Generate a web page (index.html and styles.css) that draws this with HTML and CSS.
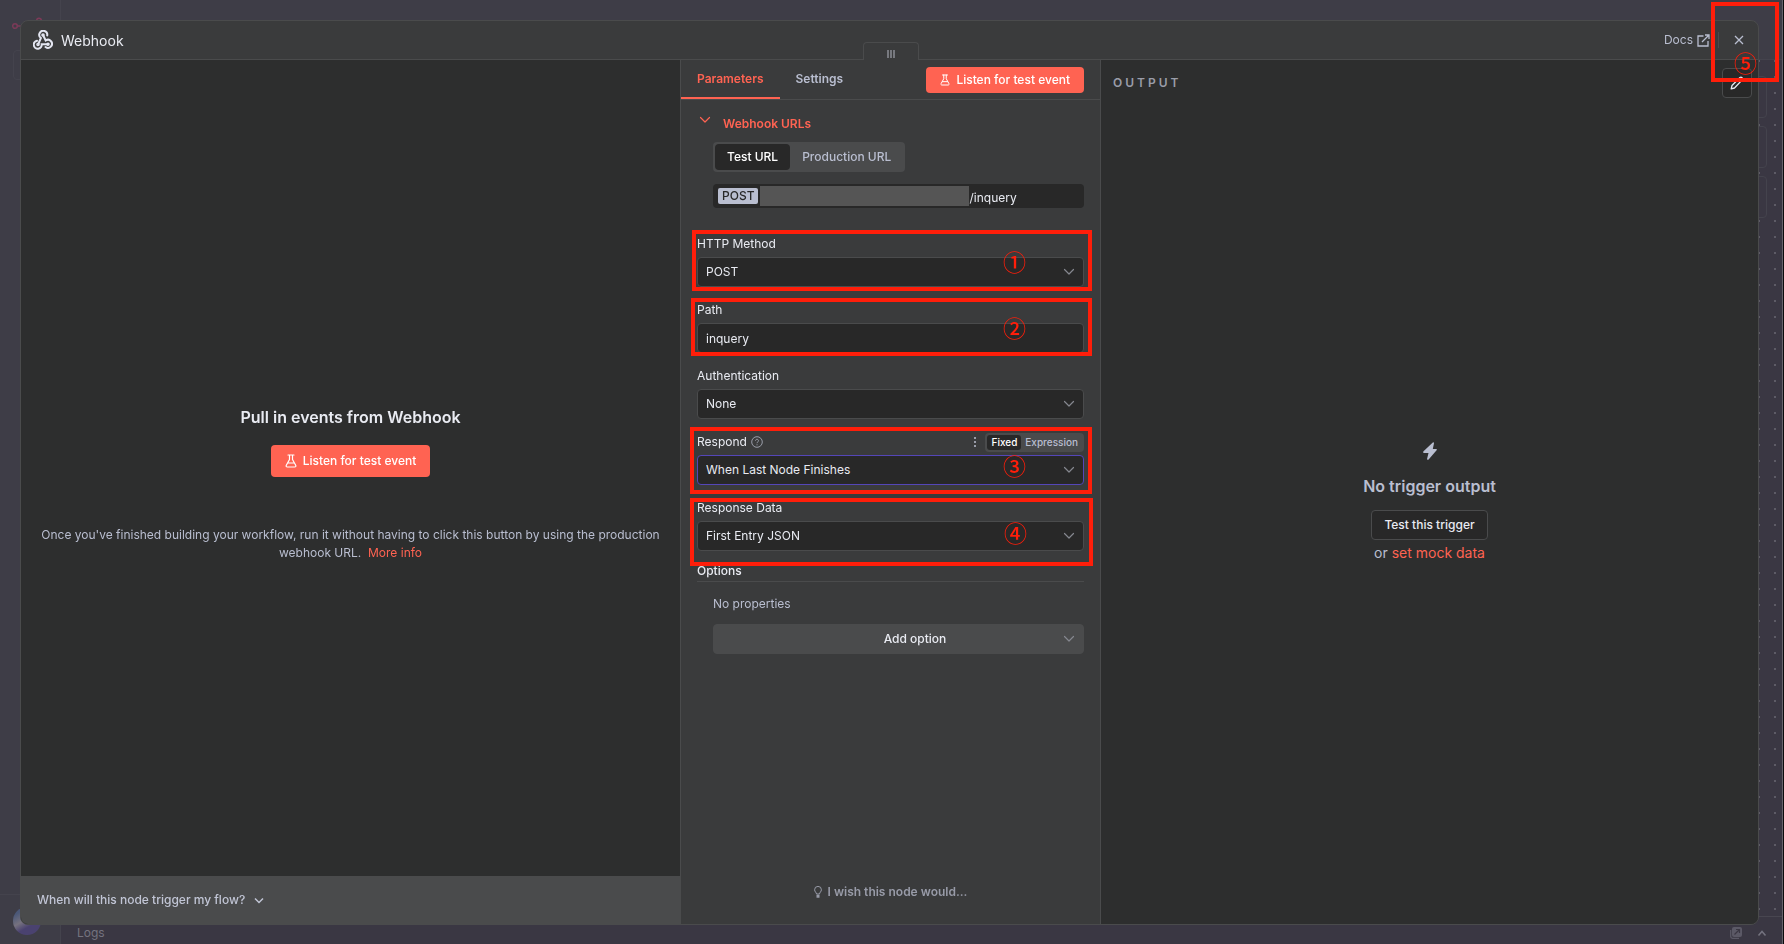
FILE: index.html
```html
<!DOCTYPE html>
<html lang="en">
<head>
    <meta charset="UTF-8">
    <meta name="viewport" content="width=device-width, initial-scale=1.0">
    <title>Webhook</title>
    <link rel="stylesheet" href="styles.css">
</head>
<body>
<svg class="sprite" aria-hidden="true">
    <symbol id="chevron" viewBox="0 0 12 8"><path d="M1.500 1.500 6 6l4.500-4.500" fill="none" stroke="currentColor" stroke-width="1.200" stroke-linecap="round" stroke-linejoin="round"/></symbol>
    <symbol id="flask" viewBox="0 0 12 14"><path d="M3 1h6M4.500 1v4.500L1.300 11.300c-.5 1 0 1.700 1 1.700h7.400c1 0 1.500-.7 1-1.700L7.500 5.500V1M3 9h6" fill="none" stroke="currentColor" stroke-width="1.200" stroke-linecap="round" stroke-linejoin="round"/></symbol>
</svg>

<!-- Editor behind the dialog -->
<div class="editor" aria-hidden="true">
    <div class="sidebar">
        <svg class="brand" viewBox="0 0 36 20" width="36" height="20">
            <g fill="none" stroke="#7c3a58" stroke-width="1.500"><circle cx="3" cy="14" r="2.300"/><path d="M5.500 14H9"/><circle cx="27" cy="8.500" r="2.300"/></g>
        </svg>
        <div class="nav-box"></div>
        <div class="user"><span class="avatar"></span></div>
    </div>
    <div class="workspace">
        <div class="topbar"></div>
        <div class="canvas">
            <div class="tool"></div>
            <div class="tool"></div>
            <div class="tool"></div>
        </div>
        <div class="logs">
            <span>Logs</span>
            <svg class="pop" viewBox="0 0 12 12" width="12" height="12"><rect x="2" y="0" width="10" height="10" rx="2" fill="#5b5966"/><path d="M.7 3v6.500q0 1.800 1.800 1.800H9" fill="none" stroke="#5b5966" stroke-width="1.300"/><path d="m4.500 7.500 5-5M6 2.500h3.500V6" fill="none" stroke="#3a3743" stroke-width="1.200"/></svg>
            <svg class="up" viewBox="0 0 10 7" width="10" height="7"><path d="m1.500 5.500 3.500-4 3.500 4" fill="none" stroke="currentColor" stroke-width="1.500"/></svg>
        </div>
    </div>
</div>

<div class="dialog" role="dialog" aria-labelledby="node-title">
    <header class="dialog-header">
        <svg class="node-icon" viewBox="0 0 20 20" width="20" height="20" fill="none" stroke="#e3e6f1" stroke-width="2" stroke-linecap="round">
            <path d="M14.200 5.500A4 4 0 1 0 7.900 8L5.500 13.500"/>
            <path d="M4 10.800a4 4 0 1 0 4.700 3.400h6.300"/>
            <path d="m10 5 2.700 5.500A4 4 0 1 1 12.500 17"/>
            <circle cx="10" cy="5" r=".8"/><circle cx="5" cy="14.500" r=".8"/><circle cx="15" cy="14.300" r=".8"/>
        </svg>
        <h1 id="node-title">Webhook</h1>
        <a class="docs" href="#">Docs
            <svg viewBox="0 0 13 13" width="13" height="13" fill="none" stroke="currentColor" stroke-width="1.300"><path d="M6.500 2H1v10h10V7M5 8l7-7M8 1h4v4"/></svg>
        </a>
        <button class="close" type="button" aria-label="Close">
            <svg viewBox="0 0 10 10" width="10" height="10" fill="none" stroke="currentColor" stroke-width="1.300"><path d="m1 1 8 8M9 1 1 9"/></svg>
        </button>
        <div class="mark mark-close"><span>⑤</span></div>
    </header>

    <div class="panels">
        <section class="input-panel">
            <div class="intro">
                <h2>Pull in events from Webhook</h2>
                <button class="primary large" type="button"><svg width="12" height="14"><use href="#flask"/></svg>Listen for test event</button>
                <p>Once you've finished building your workflow, run it without having to click this button by using the production webhook URL.&nbsp; <a href="#">More info</a></p>
            </div>
            <button class="help" type="button">When will this node trigger my flow?<svg viewBox="0 0 10 7" width="10" height="7"><path d="m1 1.500 4 4 4-4" fill="none" stroke="currentColor" stroke-width="1.500"/></svg></button>
        </section>

        <section class="params-panel">
            <div class="drag"><i></i><i></i><i></i></div>
            <nav class="tabs">
                <a class="tab active" href="#">Parameters</a>
                <a class="tab" href="#">Settings</a>
                <button class="primary" type="button"><svg width="10" height="12"><use href="#flask"/></svg>Listen for test event</button>
            </nav>

            <form class="params">
                <div class="urls">
                    <button class="urls-title" type="button"><svg width="12" height="8"><use href="#chevron"/></svg>Webhook URLs</button>
                    <div class="switch">
                        <button class="on" type="button">Test URL</button>
                        <button type="button">Production URL</button>
                    </div>
                    <div class="url"><span class="method">POST</span><span class="masked"></span><span class="url-path">/inquery</span></div>
                </div>

                <div class="field">
                    <div class="label-row"><label for="method">HTTP Method</label></div>
                    <div class="control">
                        <select id="method"><option>POST</option></select>
                        <svg class="arrow" width="12" height="8"><use href="#chevron"/></svg>
                    </div>
                    <div class="mark mark-method"><span>①</span></div>
                </div>
                <div class="field">
                    <div class="label-row"><label for="path">Path</label></div>
                    <div class="control"><input id="path" type="text" value="inquery"></div>
                    <div class="mark mark-path"><span>②</span></div>
                </div>
                <div class="field">
                    <div class="label-row"><label for="auth">Authentication</label></div>
                    <div class="control">
                        <select id="auth"><option>None</option></select>
                        <svg class="arrow" width="12" height="8"><use href="#chevron"/></svg>
                    </div>
                </div>
                <div class="field">
                    <div class="label-row">
                        <label for="respond">Respond</label>
                        <svg class="hint" viewBox="0 0 12 12" width="12" height="12" fill="none" stroke="currentColor"><circle cx="6" cy="6" r="5.300"/><path d="M4.500 4.800c0-2 3-2 3 0C7.500 6 6 5.800 6 7.200M6 8.300v1"/></svg>
                        <svg class="dots" viewBox="0 0 2 10" width="2" height="10" fill="currentColor"><path d="M0 0h2v2H0zM0 4h2v2H0zM0 8h2v2H0z"/></svg>
                        <div class="mode"><button class="on" type="button">Fixed</button><button type="button">Expression</button></div>
                    </div>
                    <div class="control focused">
                        <select id="respond"><option>When Last Node Finishes</option></select>
                        <svg class="arrow" width="12" height="8"><use href="#chevron"/></svg>
                    </div>
                    <div class="mark mark-respond"><span>③</span></div>
                </div>
                <div class="field">
                    <div class="label-row"><label for="data">Response Data</label></div>
                    <div class="control">
                        <select id="data"><option>First Entry JSON</option></select>
                        <svg class="arrow" width="12" height="8"><use href="#chevron"/></svg>
                    </div>
                    <div class="mark mark-data"><span>④</span></div>
                </div>

                <h3>Options</h3>
                <div class="options">
                    <p>No properties</p>
                    <div class="control add">
                        <select aria-label="Add option"><option>Add option</option></select>
                        <svg class="arrow" width="12" height="8"><use href="#chevron"/></svg>
                    </div>
                </div>
            </form>

            <a class="wish" href="#">
                <svg viewBox="0 0 8 12" width="8" height="12" fill="none" stroke="currentColor"><path d="M2.500 8C2.500 6.500.6 5.700.6 3.800a3.400 3.400 0 0 1 6.800 0C7.400 5.700 5.500 6.500 5.500 8z"/><path d="M2.500 9.500h3M2.500 11h3" stroke-width="1.500"/></svg>
                I wish this node would...
            </a>
        </section>

        <section class="output-panel">
            <div class="output-header">
                <h2>Output</h2>
                <button class="edit" type="button" aria-label="Edit output">
                    <svg viewBox="0 0 14 14" width="14" height="14" fill="none" stroke="currentColor" stroke-width="1.300" stroke-linejoin="round"><path d="M1.200 12.800 2 9.500l8-8q1-.8 2 .2t.2 2.200L4.500 12zM9 2.500 11.500 5"/></svg>
                </button>
            </div>
            <div class="empty">
                <svg viewBox="0 0 14 18" width="14" height="18" fill="#b9bed0"><path d="M9.800.4Q11 0 11 1.200L9.800 7h3.400q1.200.3.400 1.300l-8 9.300q-1.600.8-1.500-.8L5.500 11H.9Q-.4 10.600.5 9.300z"/></svg>
                <h3>No trigger output</h3>
                <button type="button">Test this trigger</button>
                <p>or <a href="#">set mock data</a></p>
            </div>
        </section>
    </div>
</div>
</body>
</html>
```

FILE: styles.css
```css
* {
    box-sizing: border-box;
}
body {
    margin: 0;
    font-family: Inter, sans-serif;
    font-size: 12px;
    line-height: 18px;
    color: #e9ebf2;
    background-color: #3a3743;
}
h1, h2, h3, p {
    margin: 0;
}
a {
    color: #ff6352;
    text-decoration: none;
}
button, input, select {
    font: inherit;
    color: inherit;
    margin: 0;
    border: none;
    background: none;
    appearance: none;
}
button {
    padding: 0;
    cursor: pointer;
}
svg {
    flex: none;
    display: block;
}
.sprite {
    position: absolute;
    width: 0;
    height: 0;
}

/* editor */
.editor {
    display: flex;
    height: 100vh;
    overflow: hidden;
    border-right: 1px solid #0b0b0c;
}
.sidebar {
    width: 61px;
    display: flex;
    flex-direction: column;
    background-color: #3e3d47;
    border-right: 1px solid #44434d;
}
.brand {
    margin: 12px 0 18px 12px;
}
.nav-box {
    height: 30px;
    margin: 0 13px;
    border: 1px solid #44434d;
    border-radius: 4px;
}
.user {
    height: 50px;
    margin-top: auto;
    padding: 12px 13px;
    border-top: 1px solid #44434d;
}
.avatar {
    display: block;
    width: 28px;
    height: 28px;
    border-radius: 50%;
    background: linear-gradient(150deg, #4b5878 20%, #76727f 45%, #4a4270 65%);
}
.workspace {
    flex: 1;
    display: flex;
    flex-direction: column;
    border-right: 1px solid #65636b;
}
.topbar {
    height: 60px;
    background-color: #3e3d47;
    border-bottom: 1px solid #44434d;
}
.canvas {
    flex: 1;
    display: flex;
    flex-direction: column;
    align-items: flex-end;
    gap: 8px;
    padding: 16px 15px;
    background-image: radial-gradient(circle, #5d5b66 1px, transparent 1px);
    background-size: 16px 16px;
    background-position: 10px 9px;
}
.tool {
    width: 42px;
    height: 42px;
    border: 1px solid #44434d;
    border-radius: 4px;
    background-color: #3a3743;
}
.logs {
    display: flex;
    align-items: center;
    height: 28px;
    padding: 5px 15px 0 16px;
    border-top: 1px solid #484650;
    background-color: #3a3743;
    color: #74737f;
}
.pop {
    margin-left: auto;
    margin-right: 15px;
}

/* dialog */
.dialog {
    position: fixed;
    inset: 20px 25px 19px 20px;
    display: flex;
    flex-direction: column;
    border: 1px solid #4a4b4c;
    border-radius: 8px;
    background-color: #3a3b3c;
}
.dialog-header {
    position: relative;
    display: flex;
    align-items: center;
    height: 39px;
    padding: 0 14px 0 12px;
    border-bottom: 1px solid #4a4b4c;
}
.dialog-header h1 {
    margin-left: 8px;
    padding-top: 2px;
    font-size: 14px;
    font-weight: 400;
}
.docs {
    display: flex;
    align-items: center;
    gap: 4px;
    margin-left: auto;
    padding-right: 8px;
    color: #b9bed0;
}
.close {
    padding: 3px 0 3px 15px;
    border-left: 1px solid #4a4b4c;
    color: #b9bed0;
}
.panels {
    flex: 1;
    display: flex;
    min-height: 0;
}

/* callouts */
.mark {
    position: absolute;
    z-index: 2;
    border: 4px solid #ff1e0a;
    pointer-events: none;
}
.mark span {
    position: absolute;
    top: 50%;
    right: 62px;
    font-family: "Noto Sans CJK JP", sans-serif;
    font-size: 23px;
    font-weight: 500;
    line-height: 24px;
    color: #ff1e0a;
    transform: translateY(-50%);
}
.mark-method {
    inset: -3px -8px 8px -5px;
}
.mark-path {
    inset: -1px -8px 9px -6px;
}
.mark-respond {
    inset: -4px -8px 3px -7px;
}
.mark-respond span {
    top: 58%;
}
.mark-data {
    inset: 1px -9px -3px -7px;
}
.mark-close {
    top: -19px;
    right: -21px;
    width: 68px;
    height: 80px;
}
.mark-close span {
    top: 56px;
    right: 18px;
}

/* input side */
.input-panel {
    flex: 1 1 2px;
    display: flex;
    flex-direction: column;
    border-bottom-left-radius: 7px;
    overflow: hidden;
    background-color: #2d2e2e;
}
.intro {
    flex: 1;
    display: flex;
    flex-direction: column;
    align-items: center;
    justify-content: center;
    padding: 33px 16px 0;
    text-align: center;
    color: #b9bed0;
}
.intro h2 {
    font-size: 16px;
    font-weight: 600;
    line-height: 20px;
    margin-bottom: 18px;
    color: #e9ebf2;
}
.primary {
    display: flex;
    align-items: center;
    gap: 6px;
    height: 26px;
    padding: 0 14px;
    border-radius: 4px;
    background-color: #ff6352;
    color: #fff;
    font-weight: 500;
}
.primary.large {
    height: 32px;
    margin-bottom: 49px;
}
.help {
    display: flex;
    align-items: center;
    gap: 9px;
    height: 48px;
    padding: 0 16px;
    background-color: #4a4b4c;
    color: #c1c5d5;
    font-weight: 500;
}

/* parameters */
.params-panel {
    position: relative;
    width: 421px;
    display: flex;
    flex-direction: column;
    border: 1px solid #4a4b4c;
    border-width: 0 1px;
}
.drag {
    position: absolute;
    top: -18px;
    left: 50%;
    display: flex;
    justify-content: center;
    gap: 1px;
    width: 56px;
    height: 18px;
    margin-left: -28px;
    padding-top: 7px;
    border: 1px solid #4a4b4c;
    border-bottom: none;
    border-radius: 4px 4px 0 0;
    background-color: #3a3b3c;
}
.drag i {
    width: 2px;
    height: 8px;
    background-color: #77797f;
}
.tabs {
    display: flex;
    align-items: center;
    height: 40px;
    padding-right: 16px;
    border-bottom: 1px solid #4a4b4c;
}
.tab {
    height: 39px;
    padding: 0 16px;
    line-height: 38px;
    font-weight: 600;
    color: #b9bed0;
}
.tab.active {
    border-bottom: 2px solid #ff6352;
    color: #ff6352;
}
.tabs .primary {
    margin-left: auto;
}
.params {
    padding: 15px 16px 0;
}
.urls {
    margin-bottom: 25px;
    padding-left: 16px;
}
.urls-title {
    display: flex;
    gap: 12px;
    margin-left: -14px;
    color: #ff6352;
    font-weight: 600;
}
.urls-title svg {
    margin-top: 1px;
}
.switch {
    display: inline-flex;
    height: 30px;
    margin-top: 9px;
    padding: 2px;
    border-radius: 4px;
    background-color: #4a4b4c;
    color: #b9bed0;
    font-weight: 500;
    vertical-align: top;
}
.switch button {
    padding: 0 12px;
    border-radius: 4px;
}
.switch .on, .mode .on {
    background-color: #282828;
    color: #fff;
}
.url {
    display: flex;
    align-items: center;
    height: 24px;
    margin-top: 12px;
    padding: 0 5px;
    border-radius: 4px;
    background-color: #282828;
}
.method {
    padding: 0 4px;
    line-height: 16px;
    border-radius: 2px;
    background-color: #b9bed0;
    color: #282828;
    font-weight: 500;
}
.masked {
    width: 209px;
    height: 20px;
    margin-left: 2px;
    background-color: #555;
}
.url-path {
    padding-top: 4px;
}
.field {
    position: relative;
    padding-bottom: 12px;
}
.label-row {
    display: flex;
    align-items: center;
    height: 22px;
    margin-bottom: 2px;
}
.control {
    position: relative;
}
.control select, .control input {
    display: block;
    width: 100%;
    height: 30px;
    padding: 0 8px;
    border: 1px solid #4a4b4c;
    border-radius: 4px;
    background-color: #282828;
}
.control.focused select {
    border-color: #5446b8;
}
.arrow {
    position: absolute;
    right: 9px;
    top: 11px;
    color: #85878f;
    pointer-events: none;
}
.hint {
    margin-left: 4px;
    color: #9a9da9;
}
.dots {
    margin-left: auto;
    margin-right: 9px;
    color: #9a9da9;
}
.mode {
    display: flex;
    height: 19px;
    padding: 2px;
    border-radius: 4px;
    background-color: #4a4b4c;
    color: #b9bed0;
    font-size: 10px;
    line-height: 15px;
    font-weight: 500;
}
.mode button {
    padding: 0 4px;
    border-radius: 3px;
}
.params h3 {
    padding-bottom: 2px;
    font-size: 12px;
    font-weight: 500;
    line-height: 16px;
    border-bottom: 1px solid #4a4b4c;
}
.options {
    padding: 13px 0 0 16px;
    color: #b9bed0;
}
.options p {
    margin-bottom: 11px;
}
.control.add select {
    padding: 0 12px 0 45px;
    background-color: #4a4b4c;
    color: #e9ebf2;
    font-weight: 500;
    text-align-last: center;
}
.wish {
    display: flex;
    justify-content: center;
    align-items: center;
    gap: 6px;
    margin-top: auto;
    margin-bottom: 23px;
    color: #989ba8;
    font-weight: 600;
}

/* output side */
.output-panel {
    flex: 1;
    display: flex;
    flex-direction: column;
    border-bottom-right-radius: 7px;
    background-color: #2d2e2e;
}
.output-header {
    display: flex;
    align-items: center;
    justify-content: space-between;
    height: 46px;
    padding: 0 6px 0 12px;
}
.output-header h2 {
    font-size: 12px;
    font-weight: 600;
    letter-spacing: 3px;
    text-transform: uppercase;
    color: #9a9da9;
}
.edit {
    display: grid;
    place-items: center;
    width: 30px;
    height: 30px;
    border: 1px solid #4a4b4c;
    border-radius: 4px;
    background-color: #282828;
}
.empty {
    flex: 1;
    display: flex;
    flex-direction: column;
    align-items: center;
    justify-content: center;
    padding-bottom: 26px;
    font-size: 14px;
    color: #b9bed0;
}
.empty h3 {
    margin: 16px 0 14px;
    font-size: 16px;
    font-weight: 600;
    line-height: 20px;
}
.empty button {
    height: 30px;
    margin-bottom: 4px;
    padding: 0 12px;
    border: 1px solid #4a4b4c;
    border-radius: 4px;
    background-color: #282828;
    font-size: 12px;
    font-weight: 500;
    color: #e9ebf2;
}
```
